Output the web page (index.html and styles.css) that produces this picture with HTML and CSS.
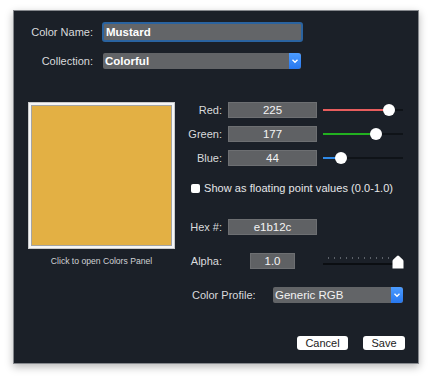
FILE: index.html
```html
<!DOCTYPE html>
<html>
<head>
<meta charset="utf-8">
<link rel="stylesheet" href="styles.css">
</head>
<body>
<div class="panel">
  <div class="top">
    <div class="label">Color Name:</div>
    <div class="name-field">Mustard</div>
    <div class="label">Collection:</div>
    <div class="select sel-collection"><span class="sel-text">Colorful</span><span class="sel-btn"><svg width="8" height="6" viewBox="0 0 8 6"><polyline points="1.5,1.8 4,4.2 6.5,1.8" fill="none" stroke="#fff" stroke-width="1.4"/></svg></span></div>
  </div>

  <div class="mid">
    <div class="swatch-col">
      <div class="swatch"><div class="swatch-fill"></div></div>
      <div class="caption">Click to open Colors Panel</div>
    </div>
    <div class="right">
      <div class="rgb">
        <div class="rlabel">Red:</div>
        <div class="field">225</div>
        <div class="slider red" style="--v:0.882"><div class="track"></div><div class="knob"></div></div>
        <div class="rlabel">Green:</div>
        <div class="field">177</div>
        <div class="slider green" style="--v:0.694"><div class="track"></div><div class="knob"></div></div>
        <div class="rlabel">Blue:</div>
        <div class="field">44</div>
        <div class="slider blue" style="--v:0.173"><div class="track"></div><div class="knob"></div></div>
      </div>
      <div class="check-row"><span class="checkbox"></span><span class="check-text">Show as floating point values (0.0-1.0)</span></div>
      <div class="hex-row">
        <div class="rlabel">Hex #:</div>
        <div class="field">e1b12c</div>
      </div>
      <div class="alpha-row">
        <div class="rlabel">Alpha:</div>
        <div class="field alpha-field">1.0</div>
        <div class="alpha-slider">
          <div class="ticks"></div>
          <div class="atrack"></div>
          <svg class="aknob" width="12" height="14" viewBox="0 0 12 14"><path d="M0.5 13.5 V6.2 Q0.5 5.2 1.3 4.5 L5 1 Q6 0.2 7 1 L10.7 4.5 Q11.5 5.2 11.5 6.2 V13.5 Z" fill="#fff"/></svg>
        </div>
      </div>
      <div class="profile-row">
        <div class="plabel">Color Profile:</div>
        <div class="select sel-profile"><span class="sel-text normal">Generic RGB</span><span class="sel-btn"><svg width="8" height="6" viewBox="0 0 8 6"><polyline points="1.5,1.8 4,4.2 6.5,1.8" fill="none" stroke="#fff" stroke-width="1.4"/></svg></span></div>
      </div>
    </div>
  </div>

  <div class="footer">
    <div class="btn btn-cancel">Cancel</div>
    <div class="btn btn-save">Save</div>
  </div>
</div>
</body>
</html>
```

FILE: styles.css
```css
html, body {
  margin: 0;
  padding: 0;
  background: #ffffff;
}
body {
  font-family: "Liberation Sans", Arial, Helvetica, sans-serif;
  font-size: 11px;
  color: #d9dadc;
  width: 432px;
  height: 380px;
  overflow: hidden;
}
.panel {
  box-sizing: border-box;
  margin: 10px 0 0 13px;
  width: 406px;
  height: 354px;
  border: 1px solid #85888d;
  background: #1b2028;
  box-shadow: 0 3px 8px rgba(0, 0, 0, 0.28);
  display: flex;
  flex-direction: column;
}
.top {
  display: grid;
  grid-template-columns: 79px 201px;
  grid-template-rows: 20px 16px;
  column-gap: 9px;
  row-gap: 11px;
  align-items: center;
  padding-top: 11px;
}
.label {
  text-align: right;
  color: #d9dadc;
  font-size: 11px;
}
.name-field {
  box-sizing: border-box;
  height: 20px;
  border: 2px solid #2a63a0;
  border-radius: 3px;
  background: #636568;
  color: #ffffff;
  font-weight: bold;
  font-size: 11.5px;
  line-height: 16px;
  padding-left: 2px;
}
.select {
  box-sizing: border-box;
  display: flex;
  height: 16px;
  background: #626467;
  border-radius: 2px;
  overflow: hidden;
}
.sel-collection {
  width: 198px;
  margin-left: 1px;
}
.sel-text {
  flex: 1;
  color: #fff;
  font-weight: bold;
  font-size: 11.5px;
  line-height: 16px;
  padding-left: 2px;
}
.sel-text.normal {
  font-weight: normal;
  font-size: 11.5px;
  color: #f2f2f2;
}
.sel-btn {
  width: 12px;
  display: flex;
  align-items: center;
  justify-content: center;
  background: linear-gradient(#4c9cff, #2777ee);
  border-radius: 0 3px 3px 0;
}
.mid {
  display: flex;
  margin-top: 33px;
  padding-left: 14px;
}
.swatch-col {
  width: 147px;
  display: flex;
  flex-direction: column;
  align-items: center;
}
.swatch {
  box-sizing: border-box;
  width: 147px;
  height: 147px;
  border: 1px solid #c9cacc;
  background: #f6f6f6;
  padding: 2px;
}
.swatch-fill {
  box-sizing: border-box;
  width: 100%;
  height: 100%;
  border: 1px solid #a4a4a4;
  background: #e3b044;
}
.caption {
  margin-top: 7px;
  font-size: 8.6px;
  color: #d0d2d5;
  line-height: 10px;
}
.right {
  margin-left: 11px;
  width: 220px;
}
.rgb {
  display: grid;
  grid-template-columns: 36px 89px 80px;
  grid-auto-rows: 16px;
  column-gap: 6px;
  row-gap: 8px;
  align-items: center;
}
.rlabel {
  text-align: right;
  color: #d9dadc;
}
.field {
  box-sizing: border-box;
  height: 16px;
  background: #5f6164;
  border: 1px solid #6d6f72;
  color: #f4f4f4;
  text-align: center;
  font-size: 11.5px;
  line-height: 14px;
}
.slider {
  position: relative;
  height: 16px;
}
.slider .track {
  position: absolute;
  left: 0;
  right: 0;
  top: 7px;
  height: 2px;
  background: #0f1318;
}
.slider .track::before {
  content: "";
  position: absolute;
  left: 0;
  top: 0;
  height: 2px;
  width: calc(var(--v) * (100% - 12px) + 6px);
  background: var(--c);
}
.slider.red { --c: #e85d5d; }
.slider.green { --c: #22b020; }
.slider.blue { --c: #2f8ae8; }
.slider .knob {
  position: absolute;
  top: 2px;
  left: calc(var(--v) * (100% - 12px));
  width: 12px;
  height: 12px;
  border-radius: 50%;
  background: #ffffff;
}
.check-row {
  display: flex;
  align-items: center;
  height: 14px;
  margin-top: 15px;
  padding-left: 5px;
}
.checkbox {
  width: 9px;
  height: 9px;
  border-radius: 2px;
  background: #ffffff;
  margin-right: 4px;
}
.check-text {
  color: #e6e7e8;
  font-size: 11px;
  letter-spacing: 0.05px;
}
.hex-row {
  display: grid;
  grid-template-columns: 36px 89px;
  column-gap: 6px;
  height: 16px;
  align-items: center;
  margin-top: 24px;
}
.alpha-row {
  display: flex;
  align-items: center;
  height: 16px;
  margin-top: 18px;
}
.alpha-row .rlabel {
  width: 36px;
}
.alpha-field {
  width: 45px;
  margin-left: 28px;
}
.alpha-slider {
  position: relative;
  margin-left: 28px;
  width: 80px;
  height: 16px;
}
.ticks {
  position: absolute;
  left: 5px;
  width: 66px;
  top: 4px;
  height: 2px;
  background: repeating-linear-gradient(90deg, #5d626a 0 1px, transparent 1px 6px);
}
.atrack {
  position: absolute;
  left: 0;
  width: 76px;
  top: 10px;
  height: 2px;
  background: #0b0e12;
}
.aknob {
  position: absolute;
  left: 69px;
  top: 2px;
}
.profile-row {
  display: flex;
  align-items: center;
  height: 16px;
  margin-top: 18px;
}
.plabel {
  margin-left: 6px;
  width: 81px;
  color: #d9dadc;
}
.sel-profile {
  width: 130px;
  height: 16px;
}
.footer {
  margin-top: auto;
  display: flex;
  justify-content: flex-end;
  gap: 15px;
  padding: 0 13px 13px 0;
}
.btn {
  box-sizing: border-box;
  height: 14px;
  background: #ffffff;
  border-radius: 3px;
  color: #222;
  font-size: 11px;
  line-height: 14px;
  text-align: center;
}
.btn-cancel { width: 51px; }
.btn-save { width: 42px; }
```
